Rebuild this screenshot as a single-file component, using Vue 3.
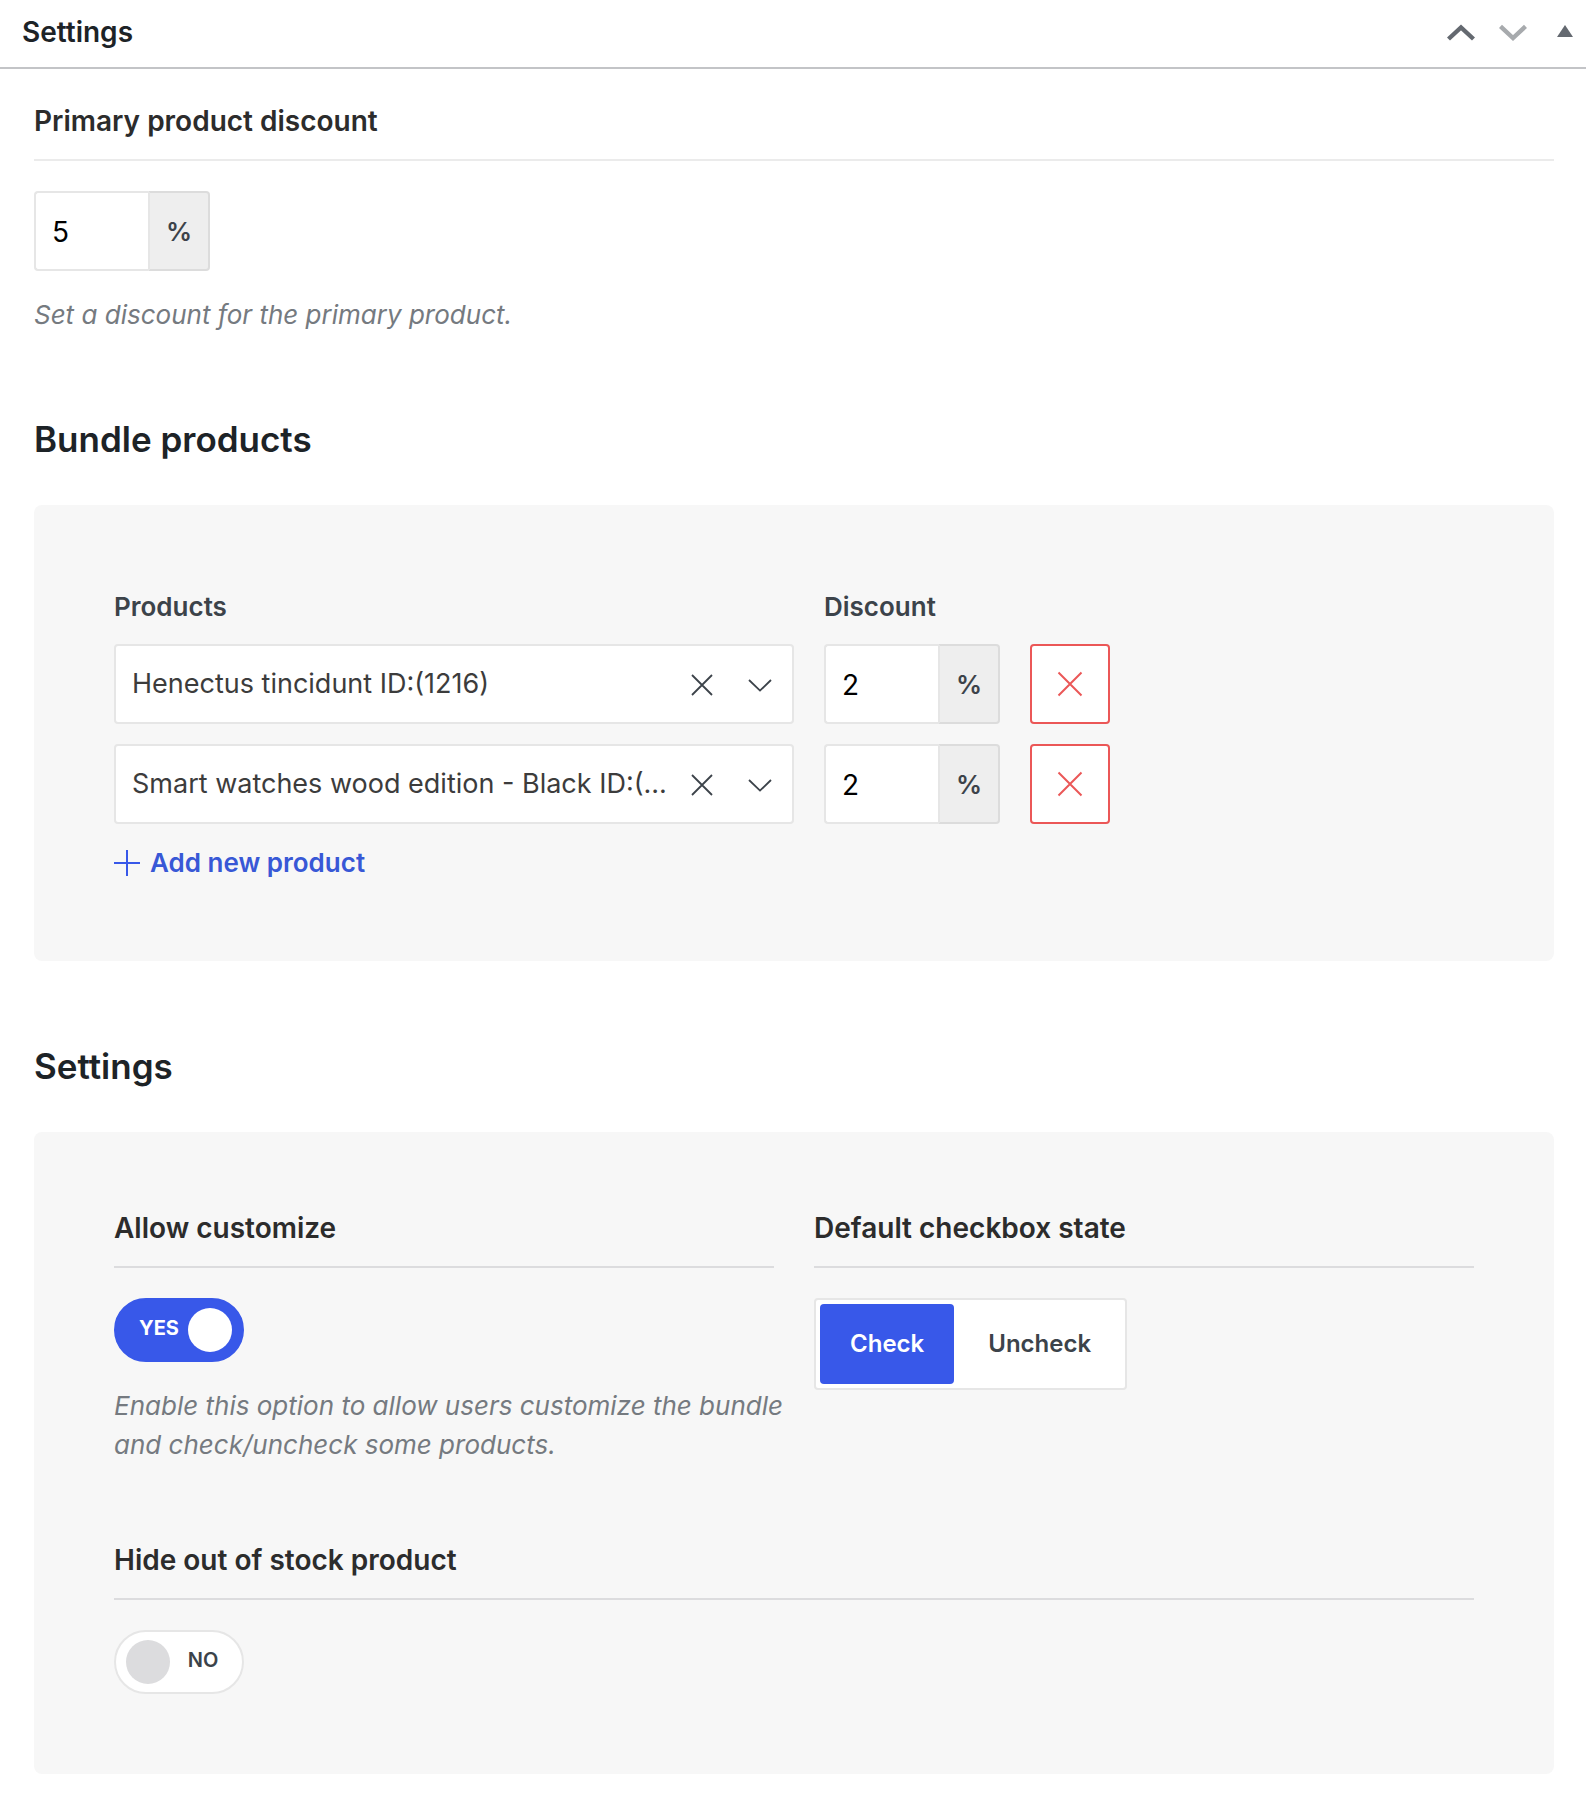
<template>
  <div class="metabox">
    <header class="metabox-header">
      <h2>Settings</h2>
      <div class="handle-actions">
        <button type="button" class="handle" aria-label="Move up">
          <svg width="28" height="18" viewBox="0 0 28 18">
            <path d="M1.5 16 L14 4.4 L26.5 16" fill="none" stroke="#646970" stroke-width="4.4" />
          </svg>
        </button>
        <button type="button" class="handle" aria-label="Move down" disabled>
          <svg width="28" height="18" viewBox="0 0 28 18">
            <path d="M1.5 3.4 L14 15 L26.5 3.4" fill="none" stroke="#a7aaad" stroke-width="4.4" />
          </svg>
        </button>
        <button type="button" class="handle" aria-label="Toggle panel">
          <svg width="16" height="18" viewBox="0 0 16 18">
            <path d="M8 2 L16 14 H0 Z" fill="#646970" />
          </svg>
        </button>
      </div>
    </header>

    <div class="metabox-body">
      <!-- Primary discount -->
      <section>
        <label class="field-title light" for="primary-discount">Primary product discount</label>
        <div class="percent-input">
          <input id="primary-discount" v-model="primaryDiscount" type="text" inputmode="numeric" />
          <span class="addon">%</span>
        </div>
        <p class="help">Set a discount for the primary product.</p>
      </section>

      <!-- Bundle products -->
      <h3 class="section-title">Bundle products</h3>
      <section class="panel">
        <div class="product-row product-labels">
          <span id="label-products">Products</span>
          <span id="label-discount">Discount</span>
        </div>
        <div class="product-list">
          <div v-for="(row, i) in rows" :key="row.id" class="product-row">
            <div class="product-select">
              <select v-model="row.product" aria-labelledby="label-products">
                <option value=""></option>
                <option v-for="name in products" :key="name" :value="name">{{ name }}</option>
              </select>
              <div class="select-icons">
                <button type="button" aria-label="Clear product" @click="row.product = ''">
                  <svg width="22" height="22" viewBox="0 0 22 22">
                    <path d="M1 1 L21 21 M21 1 L1 21" fill="none" stroke="#3c434a" stroke-width="1.8" />
                  </svg>
                </button>
                <svg width="24" height="14" viewBox="0 0 24 14">
                  <path d="M1 2 L12 12.6 L23 2" fill="none" stroke="#3c434a" stroke-width="1.8" />
                </svg>
              </div>
            </div>
            <div class="percent-input">
              <input v-model="row.discount" type="text" inputmode="numeric" aria-labelledby="label-discount" />
              <span class="addon">%</span>
            </div>
            <button type="button" class="btn-remove" aria-label="Remove product" @click="removeRow(i)">
              <svg width="26" height="26" viewBox="0 0 26 26">
                <path d="M1.5 1.5 L24.5 24.5 M24.5 1.5 L1.5 24.5" fill="none" stroke="#eb5757" stroke-width="2" />
              </svg>
            </button>
          </div>
        </div>
        <button type="button" class="btn-add" @click="addRow">
          <svg width="26" height="26" viewBox="0 0 26 26">
            <path d="M13 0 V26 M0 13 H26" fill="none" stroke="#3858e9" stroke-width="2" />
          </svg>
          Add new product
        </button>
      </section>

      <!-- Settings -->
      <h3 class="section-title">Settings</h3>
      <section class="panel settings-grid">
        <div>
          <label class="field-title" for="allow-customize">Allow customize</label>
          <label class="toggle" :class="{ 'is-on': allowCustomize }">
            <input id="allow-customize" v-model="allowCustomize" type="checkbox" />
            <span class="toggle-text">{{ allowCustomize ? 'YES' : 'NO' }}</span>
            <span class="toggle-knob"></span>
          </label>
          <p class="help">Enable this option to allow users customize the bundle and check/uncheck some products.</p>
        </div>

        <div>
          <div id="label-state" class="field-title">Default checkbox state</div>
          <div class="segmented" role="radiogroup" aria-labelledby="label-state">
            <label v-for="s in states" :key="s" :class="{ active: defaultState === s }">
              <input v-model="defaultState" type="radio" name="default-state" :value="s" />
              {{ s }}
            </label>
          </div>
        </div>

        <div class="full">
          <label class="field-title" for="hide-stock">Hide out of stock product</label>
          <label class="toggle" :class="{ 'is-on': hideOutOfStock }">
            <input id="hide-stock" v-model="hideOutOfStock" type="checkbox" />
            <span class="toggle-text">{{ hideOutOfStock ? 'YES' : 'NO' }}</span>
            <span class="toggle-knob"></span>
          </label>
        </div>
      </section>
    </div>
  </div>
</template>

<script setup>
import { ref } from 'vue'

const products = [
  'Henectus tincidunt ID:(1216)',
  'Smart watches wood edition - Black ID:(...',
]
const states = ['Check', 'Uncheck']

const primaryDiscount = ref('5')
const rows = ref([
  { id: 1, product: products[0], discount: '2' },
  { id: 2, product: products[1], discount: '2' },
])
const allowCustomize = ref(true)
const defaultState = ref('Check')
const hideOutOfStock = ref(false)

let nextId = 3

function addRow() {
  rows.value.push({ id: nextId++, product: '', discount: '' })
}

function removeRow(index) {
  rows.value.splice(index, 1)
}
</script>

<style>
body {
  background: #fff;
}
</style>

<style scoped>
.metabox,
.metabox * {
  box-sizing: border-box;
}
.metabox {
  font-family: Inter, 'Liberation Sans', sans-serif;
  font-size: 26px;
  color: #3c434a;
}
button,
input,
select {
  font-family: inherit;
  margin: 0;
}
button {
  padding: 0;
  border: 0;
  background: none;
  cursor: pointer;
}
svg {
  display: block;
  flex: none;
}

.metabox-header {
  display: flex;
  justify-content: space-between;
  align-items: center;
  padding: 0 0 3px 22px;
  border-bottom: 2px solid #c3c4c7;
}
.metabox-header h2 {
  margin: 0;
  font-size: 28px;
  font-weight: 600;
  line-height: 64px;
  color: #1d2327;
}
.handle-actions {
  display: flex;
  gap: 10px;
}
.handle {
  display: flex;
  justify-content: center;
  align-items: center;
  width: 42px;
  height: 64px;
}

.metabox-body {
  padding: 36px 32px 32px 34px;
}

.field-title {
  display: block;
  margin-bottom: 30px;
  padding-bottom: 22px;
  border-bottom: 2px solid #dcdcde;
  font-size: 28px;
  font-weight: 600;
  line-height: 32px;
  color: #2c2c2c;
}
.field-title.light {
  border-color: #ebebeb;
}

.help {
  margin: 24px -12px 0 0;
  font-size: 26px;
  font-style: italic;
  line-height: 39px;
  color: #757a80;
}

.section-title {
  margin: 80px 0 41px;
  font-size: 35px;
  font-weight: 600;
  line-height: 50px;
  color: #1d2327;
}

.panel {
  padding: 80px;
  border-radius: 8px;
  background: #f7f7f7;
}

.percent-input {
  display: flex;
  width: 176px;
  height: 80px;
}
.percent-input input {
  width: 114px;
  padding: 2px 16px 0;
  border: 2px solid #e6e6e6;
  border-right: 0;
  border-radius: 4px 0 0 4px;
  background: #fff;
  font-size: 28px;
  color: #000;
  outline: none;
}
.addon {
  flex: 1;
  padding-top: 1px;
  border: 2px solid #dcdcdc;
  border-left-color: #e6e6e6;
  border-radius: 0 4px 4px 0;
  background: #eee;
  font-size: 26px;
  font-weight: 600;
  line-height: 76px;
  text-align: center;
}

.product-row {
  display: grid;
  grid-template-columns: minmax(0, 680px) 176px 80px;
  column-gap: 30px;
}
.product-labels {
  margin-bottom: 15px;
  font-weight: 600;
  line-height: 44px;
}
.product-list {
  display: grid;
  gap: 20px;
}
.product-select {
  position: relative;
}
.product-select select {
  width: 100%;
  height: 80px;
  padding: 0 120px 2px 16px;
  border: 2px solid #e6e6e6;
  border-radius: 4px;
  background: #fff;
  font-size: 27px;
  color: #3c3c3c;
  text-overflow: ellipsis;
  appearance: none;
  outline: none;
}
.select-icons {
  position: absolute;
  top: 0;
  right: 22px;
  display: flex;
  align-items: center;
  gap: 35px;
  height: 82px;
  pointer-events: none;
}
.select-icons button {
  pointer-events: auto;
}
.btn-remove {
  display: flex;
  justify-content: center;
  align-items: center;
  height: 80px;
  border: 2px solid #eb5757;
  border-radius: 4px;
  background: #fff;
}
.btn-add {
  display: flex;
  align-items: center;
  gap: 10px;
  margin-top: 21px;
  font-size: 26px;
  font-weight: 600;
  line-height: 36px;
  color: #3858d6;
}

.settings-grid {
  display: grid;
  grid-template-columns: 1fr 1fr;
  gap: 80px 40px;
}
.full {
  grid-column: 1 / -1;
}

.toggle {
  position: relative;
  display: flex;
  flex-direction: row-reverse;
  align-items: center;
  width: 130px;
  height: 64px;
  padding: 0 10px;
  border: 2px solid #e6e6e6;
  border-radius: 32px;
  background: #fff;
  cursor: pointer;
}
.toggle input,
.segmented input {
  position: absolute;
  inset: 0;
  margin: 0;
  opacity: 0;
}
.toggle-text {
  flex: 1;
  margin-bottom: 4px;
  padding-left: 4px;
  font-size: 20px;
  font-weight: 600;
  text-align: center;
}
.toggle-knob {
  width: 44px;
  height: 44px;
  border-radius: 50%;
  background: #dcdcde;
}
.toggle.is-on {
  flex-direction: row;
  border-color: #3858e9;
  background: #3858e9;
}
.toggle.is-on .toggle-text {
  font-weight: 700;
  color: #fff;
}
.toggle.is-on .toggle-knob {
  background: #fff;
}

.segmented {
  display: inline-flex;
  gap: 4px;
  padding: 4px;
  border: 2px solid #e6e6e6;
  border-radius: 4px;
  background: #fff;
}
.segmented label {
  position: relative;
  padding: 0 30px;
  border-radius: 4px;
  font-size: 24px;
  font-weight: 600;
  line-height: 80px;
  cursor: pointer;
}
.segmented label.active {
  background: #3858e9;
  color: #fff;
}
</style>
